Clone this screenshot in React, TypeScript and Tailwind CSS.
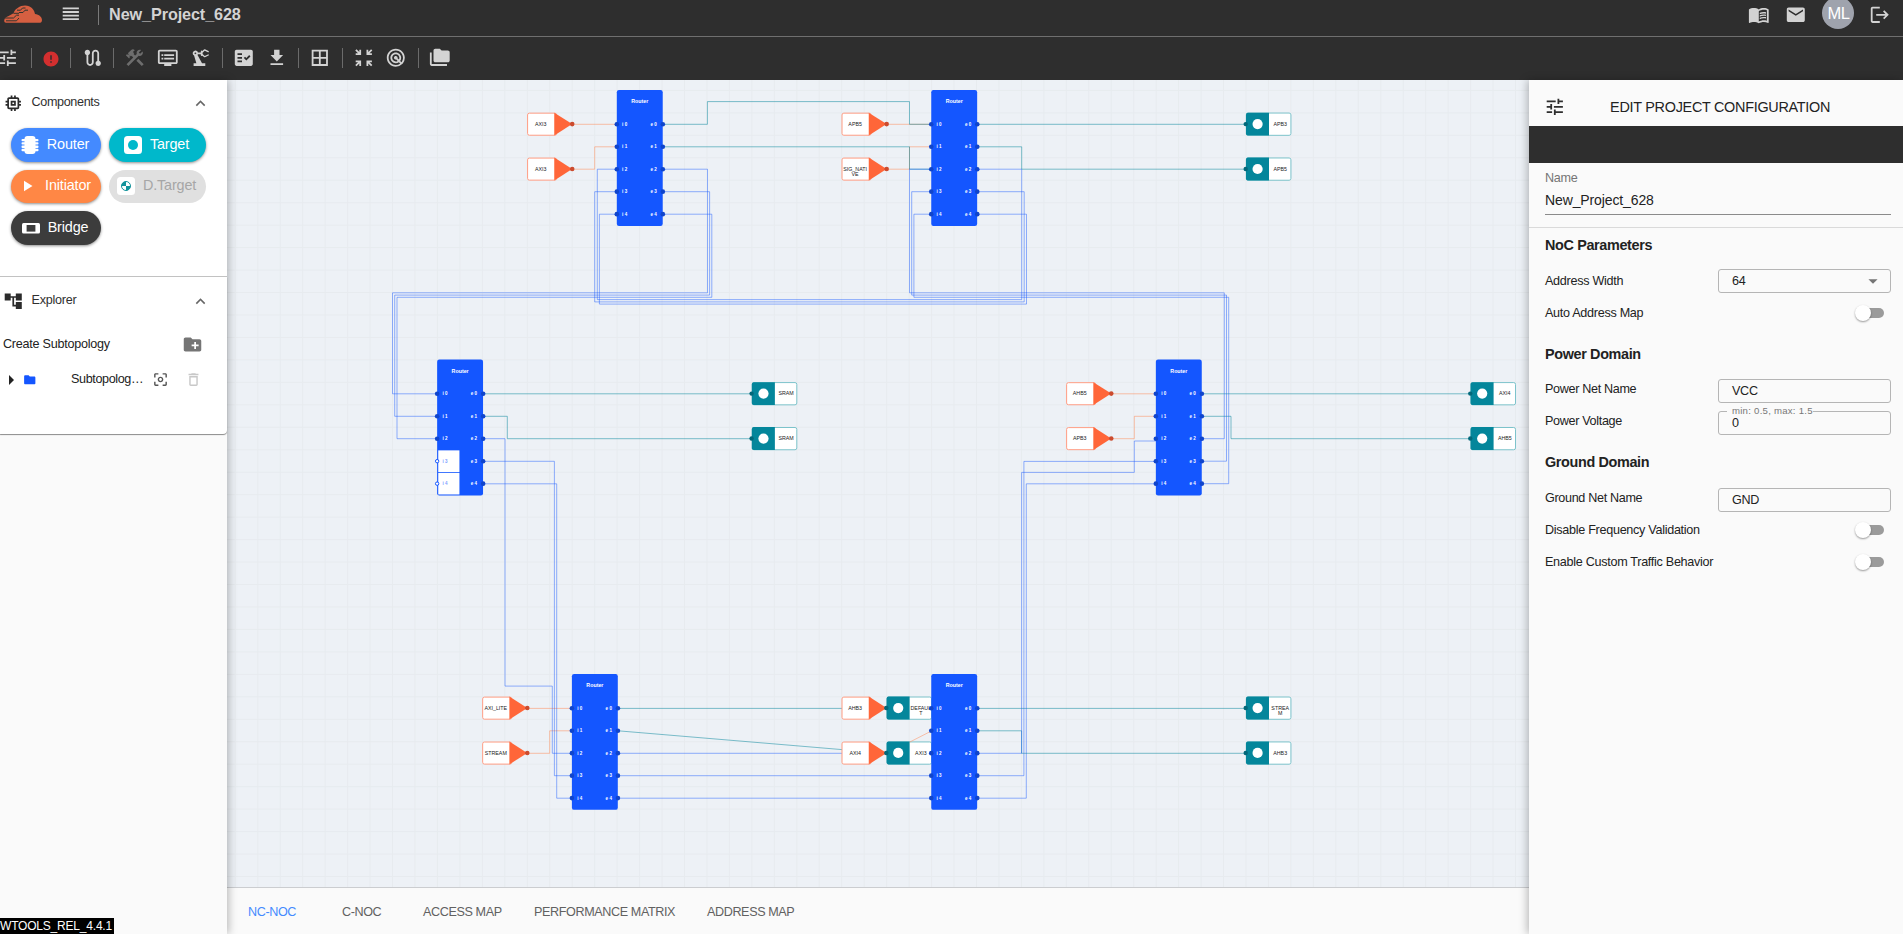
import type { ReactNode } from "react";
import {
  MdAccountTree, MdArrowDropDown, MdArrowRight, MdBorderAll, MdCenterFocusWeak, MdConstruction, MdCreateNewFolder,
  MdDeleteOutline, MdDownload, MdDvr, MdEmail, MdError, MdExpandLess, MdFactCheck, MdFolder, MdFolderCopy,
  MdLogout, MdMemory, MdMenuBook, MdPrecisionManufacturing, MdRadar, MdReorder, MdRoute, MdTune, MdZoomInMap,
} from "react-icons/md";

/* ---------- topology canvas ---------- */

const U = 22.46; // grid step
const OX = 8.3;
const OY = 10.4;
const gx = (n: number) => OX + n * U;
const gy = (n: number) => OY + n * U;

const routers = [
  { x: 17, y: 0, open: 0 },
  { x: 31, y: 0, open: 0 },
  { x: 9, y: 12, open: 2 },
  { x: 41, y: 12, open: 0 },
  { x: 15, y: 26, open: 0 },
  { x: 31, y: 26, open: 0 },
];

const initiators = [
  { x: 13, y: 1, label: ["AXI3"] },
  { x: 13, y: 3, label: ["AXI3"] },
  { x: 27, y: 1, label: ["APB5"] },
  { x: 27, y: 3, label: ["SIG_NATI", "VE"] },
  { x: 37, y: 13, label: ["AHB5"] },
  { x: 37, y: 15, label: ["APB3"] },
  { x: 11, y: 27, label: ["AXI_LITE"] },
  { x: 11, y: 29, label: ["STREAM"] },
  { x: 27, y: 27, label: ["AHB3"] },
  { x: 27, y: 29, label: ["AXI4"] },
];

const targets = [
  { x: 45, y: 1, label: ["APB3"] },
  { x: 45, y: 3, label: ["APB5"] },
  { x: 23, y: 13, label: ["SRAM"] },
  { x: 23, y: 15, label: ["SRAM"] },
  { x: 55, y: 13, label: ["AXI4"] },
  { x: 55, y: 15, label: ["AHB5"] },
  { x: 29, y: 27, label: ["DEFAUL", "T"] },
  { x: 29, y: 29, label: ["AXI3"] },
  { x: 45, y: 27, label: ["STREA", "M"] },
  { x: 45, y: 29, label: ["AHB3"] },
];

const orange = [
  "M572.4 124.3H617", "M572.4 169.2H594.7V146.8H617", "M887 124.3H931", "M887 169.2H909.5V146.8H931",
  "M1111.7 393.8H1156", "M1111.7 438.7H1134.3V416.3H1156", "M527.4 708.4H572", "M527.4 753.3H549.7V730.8H572",
];
const teal = [
  "M662 124.3H707.4V101.6H909.5V124.3H931", "M662 146.8H909.5V169.2H931", "M977 124.3H1246", "M977 146.8H1021.7V169.2H1246",
  "M482 393.8H752", "M482 416.3H507.3V438.7H752", "M1201 393.8H1471", "M1201 416.3H1231V438.7H1471",
  "M618 708.4H886", "M618 730.8L886 753.3", "M977 708.4H1246", "M977 730.8H1021.6V753.3H1246",
];
const blue = [
  "M617 169.2H597.3V299.6H1021.7V169.2H977", "M617 191.7H594.7V301.9H1024.2V191.7H977", "M617 214.2H599.4V304.1H1026.5V214.2H977",
  "M662 169.2H707.5V292.8H392.5V393.8H437", "M662 191.7H709.6V295.1H394.7V416.3H437", "M662 214.2H711.8V297.3H397V438.7H437",
  "M931 169.2H909.5V292.8H1224.3V438.7H1201", "M931 191.7H911.7V295.1H1226.5V461.2H1201", "M931 214.2H913.9V297.3H1228.7V483.7H1201",
  "M1156 441H1134.3V472.4H1021.6V753.3H977", "M1156 461.4H1023.9V775.7H977", "M1156 483.8H1026.3V798.2H977",
  "M482 438.7H505V686.1H552.3V753.3H572", "M482 461.3H554.4V775.7H572", "M482 483.8H556.7V798.2H572",
  "M618 753.3H931", "M618 775.7H931", "M618 798.2H931",
];

function Label({ x, y, lines }: { x: number; y: number; lines: string[] }) {
  return (
    <>
      {lines.map((t, i) => (
        <text key={i} x={x} y={y + 1.8 + i * 5} textAnchor="middle" className="fill-[#222] text-[5.3px]">{t}</text>
      ))}
    </>
  );
}

function Initiator({ x, y, label }: { x: number; y: number; label: string[] }) {
  const px = gx(x), py = gy(y);
  return (
    <g>
      <rect x={px + 0.3} y={py + 0.3} width={29} height={U - 0.4} rx={1.8} className="fill-white stroke-[#ff9d84]" />
      <path d={`M${px + 27} ${py - 0.2}L${px + 2 * U} ${py + U / 2}L${px + 27} ${py + U + 0.2}Z`} className="fill-[#ff6639]" />
      <circle cx={px + 2 * U} cy={py + U / 2} r={2.3} className="fill-[#cc4b2e]" />
      <Label x={px + 13.4} y={py + U / 2} lines={label} />
    </g>
  );
}

function Target({ x, y, label }: { x: number; y: number; label: string[] }) {
  const px = gx(x), py = gy(y);
  return (
    <g>
      <rect x={px + 0.3} y={py + 0.2} width={2 * U - 0.3} height={U - 0.2} rx={1.8} className="fill-white stroke-[#7cc3cb]" />
      <path d={`M${px + 1.8} ${py - 0.2}H${px + 23}V${py + U + 0.2}H${px + 1.8}q-1.8 0 -1.8 -1.8V${py + 1.6}q0 -1.8 1.8 -1.8Z`} className="fill-[#04869b]" />
      <circle cx={px + 11.6} cy={py + U / 2} r={5.1} className="fill-white" />
      <circle cx={px - 0.3} cy={py + U / 2} r={2.2} className="fill-[#03687a]" />
      <Label x={px + 34.2} y={py + U / 2} lines={label} />
    </g>
  );
}

function Router({ x, y, open }: { x: number; y: number; open: number }) {
  const px = gx(x), py = gy(y);
  return (
    <g>
      <rect x={px - 0.3} y={py - 0.3} width={45.9} height={135.8} rx={2.2} className="fill-[#1456ff]" />
      <text x={px + 22.7} y={py + 12.8} textAnchor="middle" className="fill-white text-[5.3px] font-bold">Router</text>
      {[0, 1, 2, 3, 4].map((i) => {
        const cy = py + (1.5 + i) * U + 0.2;
        const free = i >= 5 - open;
        return (
          <g key={i}>
            {free && <rect x={px + 0.8} y={cy - U / 2 + 0.4} width={21.2} height={U - 0.8} className="fill-white" />}
            <circle cx={px - 0.3} cy={cy} r={free ? 1.7 : 2.3} className={free ? "fill-white stroke-[#1456ff]" : "fill-[#1045cc]"} />
            <circle cx={px + 45.7} cy={cy} r={2.3} className="fill-[#1045cc]" />
            <text x={px + 5} y={cy + 1.5} className={free ? "fill-[#7b9dff] text-[4.5px] font-bold" : "fill-white text-[4.5px] font-bold"}>i {i}</text>
            <text x={px + 39.7} y={cy + 1.5} textAnchor="end" className="fill-white text-[4.5px] font-bold">e {i}</text>
          </g>
        );
      })}
    </g>
  );
}

function Canvas() {
  const cols = Array.from({ length: 60 }, (_, i) => gx(i));
  const rows = Array.from({ length: 36 }, (_, i) => gy(i));
  return (
    <svg width="1302" height="807" className="block bg-[#edf1f6]">
      <path d={cols.map((c) => `M${c} 0V807`).join("") + rows.map((r) => `M0 ${r}H1302`).join("")} className="fill-none stroke-[#e7ebef]" />
      <g transform="translate(-227 -80)" className="fill-none">
        <path d={orange.join("")} className="stroke-[#ff8a55]/50" />
        {teal.map((d) => <path key={d} d={d} className="stroke-[#04869b]/50" />)}
        {blue.map((d) => <path key={d} d={d} className="stroke-[#1456ff]/45" />)}
      </g>
      {initiators.map((n, i) => <Initiator key={i} {...n} />)}
      {targets.map((n, i) => <Target key={i} {...n} />)}
      <path d="M682.5 662.2L704 651.2" className="fill-none stroke-[#ff8a55]/50" />
      {routers.map((n, i) => <Router key={i} {...n} />)}
    </svg>
  );
}

/* ---------- header ---------- */

function Logo() {
  return (
    <svg width="38" height="18" viewBox="0 0 38 18" className="mt-[5px] shrink-0">
      <path d="M2 17.800C-.6 17.800-.5 13.500 3 11.800C5 10.800 8 9 9.500 8.300C10.500 5.500 12 3.800 14 2.800C17 .2 22-.2 25 1.200C29 3 30.500 6 31 9C35 9.500 38 12 38 15C38 17 37 17.800 35 17.800Z" className="fill-[#d65f41]" />
      <path d="M1 13H9.500L12.500 10.200H15M2 15.800H12.500L15 13M9.500 8.300H15M13 5.200H16.500L18.500 3H21.500M15 7.500H19L21 5.200H24" className="fill-none stroke-[#33352f] stroke-1" />
    </svg>
  );
}

function Sep() {
  return <div className="h-5 w-px shrink-0 bg-[#6b6b6b]" />;
}

function Header() {
  return (
    <header className="shrink-0 bg-[#2e2e2e] text-[#d3d3d3]">
      <div className="flex h-[37px] items-center border-b border-[#6f6f6f] pb-[7px] text-[21.6px]">
        <div className="ml-1 flex h-[30px] items-start"><Logo /></div>
        <MdReorder className="mt-[-2px] ml-[18px] text-[21.6px]" />
        <div className="ml-[16px] h-5 w-px bg-[#7a7a7a]" />
        <h1 className="ml-[10.500px] text-[16.2px] font-bold tracking-[-0.1px]">New_Project_628</h1>
        <div className="mr-[12px] ml-auto flex items-center">
          <MdMenuBook />
          <MdEmail className="ml-[15px]" />
          <div className="mt-[-3px] ml-[16px] flex size-8 items-center justify-center rounded-full bg-[#9fa3ad] text-[16.500px] tracking-[-0.5px] text-white">ML</div>
          <MdLogout className="ml-[15px]" />
        </div>
      </div>
      <div className="flex h-[43px] items-center pb-px text-[21.6px]">
        <MdTune className="ml-[-3px] shrink-0" />
        <div className="ml-[12px]"><Sep /></div>
        <MdError className="mt-px ml-[10px] text-[18px] text-[#d32f2f]" />
        <div className="ml-[10.800px]"><Sep /></div>
        <MdRoute className="ml-[10.300px]" />
        <div className="ml-[10px]"><Sep /></div>
        <MdConstruction className="ml-[9.800px] text-[#6d6d6d]" />
        <MdDvr className="ml-[11.500px]" />
        <MdPrecisionManufacturing className="ml-[10.800px]" />
        <div className="ml-[11px]"><Sep /></div>
        <MdFactCheck className="ml-[10.100px]" />
        <MdDownload className="ml-[11.400px]" />
        <div className="ml-[10.300px]"><Sep /></div>
        <MdBorderAll className="ml-[9.800px]" />
        <div className="ml-[11.400px]"><Sep /></div>
        <MdZoomInMap className="ml-[10px]" />
        <MdRadar className="ml-[10.700px]" />
        <div className="ml-[11.200px]"><Sep /></div>
        <MdFolderCopy className="ml-[10.300px]" />
      </div>
    </header>
  );
}

/* ---------- left panel ---------- */

const RouterGlyph = () => (
  <svg width="18" height="18" viewBox="0 0 18 18" className="fill-white">
    <rect x="3.500" y="0" width="11" height="18" rx="3" />
    <rect x="0.500" y="2.900" width="17" height="2.400" rx="1" />
    <rect x="0.500" y="6.200" width="17" height="2.400" rx="1" />
    <rect x="0.500" y="9.500" width="17" height="2.400" rx="1" />
    <rect x="0.500" y="12.800" width="17" height="2.400" rx="1" />
  </svg>
);
const TargetGlyph = () => (
  <svg width="18" height="18" viewBox="0 0 18 18">
    <rect width="18" height="18" rx="3.500" className="fill-white" />
    <circle cx="9" cy="9" r="5" className="fill-[#00b8cb]" />
  </svg>
);
const DTargetGlyph = () => (
  <svg width="18" height="18" viewBox="0 0 18 18">
    <rect width="18" height="18" rx="3.500" className="fill-white" />
    <circle cx="9" cy="9" r="4.500" className="fill-white stroke-[#12939b]" />
    <path d="M9 9V4.500A4.500 4.500 0 0 0 4.500 9ZM9 9V13.500A4.500 4.500 0 0 0 13.500 9Z" className="fill-[#12939b]" />
  </svg>
);
const PlayGlyph = () => (
  <svg width="18" height="18" viewBox="0 0 18 18" className="fill-white"><path d="M5 3.800L13.500 9L5 14.200Z" /></svg>
);
const BridgeGlyph = () => (
  <svg width="18" height="18" viewBox="0 0 18 18">
    <rect y="4" width="18" height="10.600" rx="1.500" className="fill-white" />
    <rect x="4.600" y="6" width="8.800" height="6.600" className="fill-[#3c3c3c]" />
  </svg>
);

function Pill({ className, children }: { className: string; children: ReactNode }) {
  return (
    <button className={`flex h-[33.500px] items-center justify-center gap-2 rounded-full pr-[2px] text-[14.4px] tracking-[-0.15px] ${className}`}>
      {children}
    </button>
  );
}

function LeftPanel() {
  return (
    <aside className="z-10 flex w-[227px] shrink-0 flex-col bg-[#fafafa] text-[12.600px] text-[#303030] shadow-[2px_0_8px_rgba(0,0,0,0.25)]">
      <section className="h-[197px] border-b border-[#c2c2c2] bg-white">
        <div className="flex items-center pt-[13px] pl-[3px]">
          <MdMemory className="text-[20.500px] text-[#2b2b2b]" />
          <span className="mt-[-1px] ml-[8px] tracking-[-0.35px]">Components</span>
          <MdExpandLess className="mr-[17px] ml-auto text-[19px] text-[#666]" />
        </div>
        <div className="mt-[14.500px] ml-[11px] grid grid-cols-[90px_97px] gap-x-2 gap-y-2">
          <Pill className="bg-[#448aff] text-white shadow-[0_1px_3px_rgba(0,0,0,0.45)]"><RouterGlyph />Router</Pill>
          <Pill className="bg-[#00b8cb] text-white shadow-[0_1px_3px_rgba(0,0,0,0.45)]"><TargetGlyph />Target</Pill>
          <Pill className="bg-[#ff8745] text-white shadow-[0_1px_3px_rgba(0,0,0,0.45)]"><PlayGlyph />Initiator</Pill>
          <Pill className="bg-[#e0e0e0] text-[#a6a6a6]"><DTargetGlyph />D.Target</Pill>
          <Pill className="bg-[#3c3c3c] text-white shadow-[0_1px_3px_rgba(0,0,0,0.45)]"><BridgeGlyph />Bridge</Pill>
        </div>
      </section>
      <section className="h-[157px] rounded-br-[4px] bg-white shadow-[0_1px_1px_rgba(0,0,0,0.45)]">
        <div className="flex items-center pt-[14px] pl-[3px]">
          <MdAccountTree className="text-[20.500px] text-[#2b2b2b]" />
          <span className="mt-[-2px] ml-[8px] tracking-[-0.25px]">Explorer</span>
          <MdExpandLess className="mr-[17px] ml-auto text-[19px] text-[#666]" />
        </div>
        <div className="mt-[21px] flex h-6 items-center pl-[3px]">
          <span className="tracking-[-0.25px] text-[#222]">Create Subtopology</span>
          <MdCreateNewFolder className="mr-[24px] ml-auto text-[21px] text-[#757575]" />
        </div>
        <div className="mt-[11px] flex h-6 items-center">
          <MdArrowRight className="-ml-[1px] text-[24px] text-[#222]" />
          <MdFolder className="-ml-[0.500px] text-[13.500px] text-[#1456ff]" />
          <span className="ml-[35px] w-[72px] shrink-0 tracking-[-0.38px] whitespace-nowrap text-[#222]">Subtopolog…</span>
          <MdCenterFocusWeak className="ml-[9px] text-[17px] text-[#555]" />
          <MdDeleteOutline className="ml-[16px] text-[17px] text-[#c8c8c8]" />
        </div>
      </section>
      <div className="mt-auto h-4 w-[114px] bg-black text-[12px] leading-4 tracking-[-0.2px] whitespace-nowrap text-white">
        WTOOLS_REL_4.4.1
      </div>
    </aside>
  );
}

/* ---------- right panel ---------- */

function Row({ label, children, className, raised }: { label: string; children: ReactNode; className: string; raised?: boolean }) {
  return (
    <div className={`flex items-center justify-between ${className}`}>
      <span className={raised ? "pb-[4px] tracking-[-0.33px] whitespace-nowrap" : "tracking-[-0.29px] whitespace-nowrap"}>{label}</span>
      {children}
    </div>
  );
}

function Field({ value, select, hint }: { value: string; select?: boolean; hint?: string }) {
  return (
    <div className="relative flex h-6 w-[173px] items-center justify-between rounded-[3px] border border-[#b5b5b5] pr-[6px] pl-[13px]">
      {hint && (
        <span className="absolute -top-[7px] left-[8px] bg-[#fafafa] pl-[5px] text-[9.600px] leading-[11px] tracking-[0.25px] whitespace-nowrap text-[#777]">{hint}</span>
      )}
      <span className="relative tracking-[-0.3px]">{value}</span>
      {select && <MdArrowDropDown className="text-[22px] text-[#757575]" />}
    </div>
  );
}

function Switch() {
  return (
    <div className="mr-[7px] flex h-4 w-[29px] items-center">
      <div className="z-10 size-4 shrink-0 rounded-full bg-white shadow-[0_1px_2px_rgba(0,0,0,0.4)]" />
      <div className="-ml-2 h-[10px] w-[21px] rounded-r-full bg-[#9b9b9b]" />
    </div>
  );
}

function RightPanel() {
  return (
    <aside className="z-10 w-[374px] shrink-0 bg-[#fafafa] text-[12.600px] text-[#222] shadow-[-2px_0_8px_rgba(0,0,0,0.25)]">
      <div className="flex h-[46px] items-center pt-[7px] pl-[15px]">
        <MdTune className="text-[21.6px] text-[#2e2e2e]" />
        <span className="mt-[2px] ml-[44.500px] text-[14.4px] tracking-[-0.27px]">EDIT PROJECT CONFIGURATION</span>
      </div>
      <div className="h-[37px] bg-[#2e2e2e]" />
      <div className="h-[65px] border-b border-[#dadada] pr-3 pl-4">
        <div className="pt-[6px] leading-[19px] tracking-[-0.3px] text-[#757575]">Name</div>
        <div className="h-[27px] border-b border-[#8b8b8b] pt-[2px] text-[14px] leading-[20px] tracking-[-0.12px]">New_Project_628</div>
      </div>
      <div className="pr-3 pl-4">
        <h2 className="pt-[7px] text-[14.4px] leading-5 font-bold tracking-[-0.35px]">NoC Parameters</h2>
        <Row className="mt-[14px] h-6" label="Address Width"><Field value="64" select /></Row>
        <Row className="mt-[8px] h-6" label="Auto Address Map"><Switch /></Row>
        <h2 className="mt-[19px] text-[14.4px] leading-5 font-bold tracking-[-0.35px]">Power Domain</h2>
        <Row raised className="mt-[15px] h-6" label="Power Net Name"><Field value="VCC" /></Row>
        <Row raised className="mt-[8px] h-6" label="Power Voltage"><Field value="0" hint="min: 0.5, max: 1.5" /></Row>
        <h2 className="mt-[17px] text-[14.4px] leading-5 font-bold tracking-[-0.35px]">Ground Domain</h2>
        <Row raised className="mt-[16px] h-6" label="Ground Net Name"><Field value="GND" /></Row>
        <Row className="mt-[6px] h-6" label="Disable Frequency Validation"><Switch /></Row>
        <Row className="mt-[8px] h-6" label="Enable Custom Traffic Behavior"><Switch /></Row>
      </div>
    </aside>
  );
}

function Tabs() {
  return (
    <nav className="flex h-[47px] items-center border-t border-[#cbcdd0] bg-[#fafafa] pt-[3px] pl-[21px] text-[12.600px] tracking-[-0.39px] whitespace-nowrap text-[#616161]">
      <span className="w-[94px] text-[#448aff]">NC-NOC</span>
      <span className="w-[81px]">C-NOC</span>
      <span className="w-[111px]">ACCESS MAP</span>
      <span className="w-[173px]">PERFORMANCE MATRIX</span>
      <span>ADDRESS MAP</span>
    </nav>
  );
}

export default function App() {
  return (
    <div className="flex h-[934px] w-[1903px] flex-col overflow-hidden bg-[#edf1f6] font-['Liberation_Sans',Arial,sans-serif]">
      <Header />
      <div className="flex min-h-0 flex-1">
        <LeftPanel />
        <main className="flex min-w-0 flex-1 flex-col">
          <Canvas />
          <Tabs />
        </main>
        <RightPanel />
      </div>
    </div>
  );
}
